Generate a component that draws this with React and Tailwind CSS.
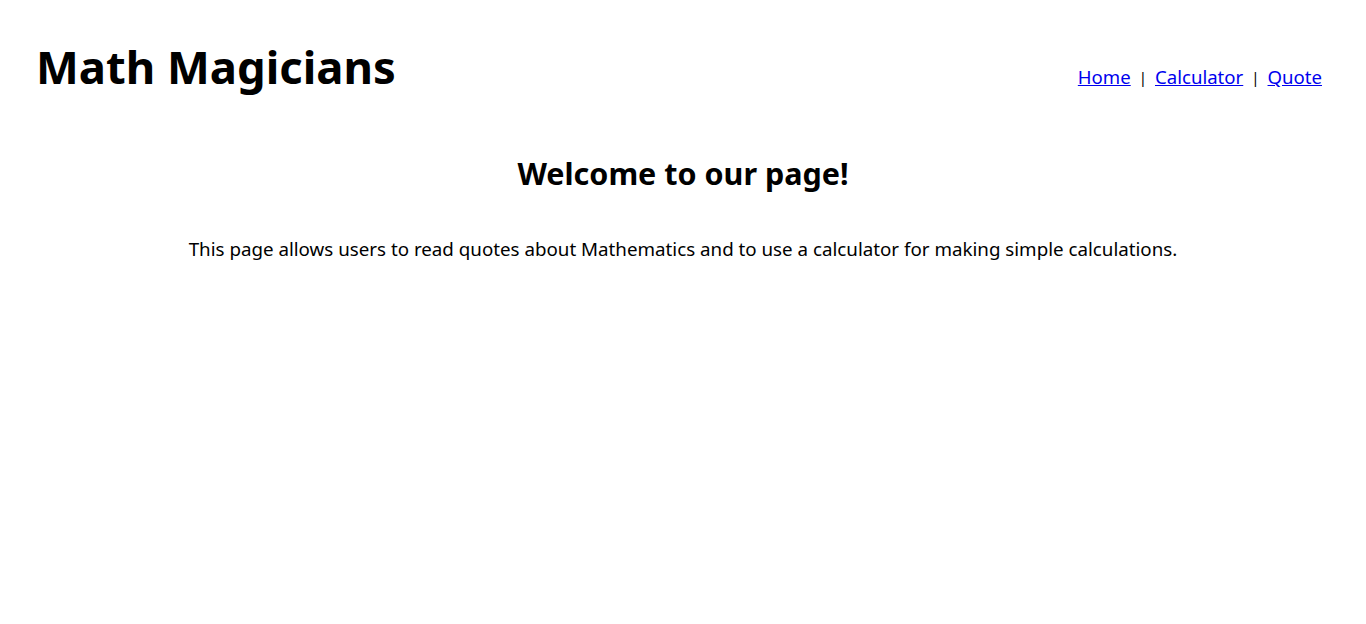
import React from 'react';

function NavBar() {
  const links = ['Home', 'Calculator', 'Quote'];
  return (
    <nav className="flex items-center pt-[22px] text-[18.6px]">
      {links.map((label, i) => (
        <React.Fragment key={label}>
          {i > 0 && <span className="mx-[8px] text-[15px] text-black">|</span>}
          <a href="#" className="text-[#0000ee] underline">
            {label}
          </a>
        </React.Fragment>
      ))}
    </nav>
  );
}

export default function App() {
  return (
    <div className="min-h-screen bg-white text-black" style={{ fontFamily: '"Noto Sans", "Open Sans", sans-serif' }}>
      <header className="flex items-center justify-between pl-[36px] pr-[44px] pt-[39px]">
        <h1 className="text-[45.4px] font-bold leading-[1.2]">Math Magicians</h1>
        <NavBar />
      </header>
      <main className="flex flex-col items-center">
        <h2 className="mt-[62px] text-[30.5px] font-bold leading-[1.2]">Welcome to our page!</h2>
        <p className="mt-[43px] text-[18.75px]">
          This page allows users to read quotes about Mathematics and to use a calculator for making simple calculations.
        </p>
      </main>
    </div>
  );
}
